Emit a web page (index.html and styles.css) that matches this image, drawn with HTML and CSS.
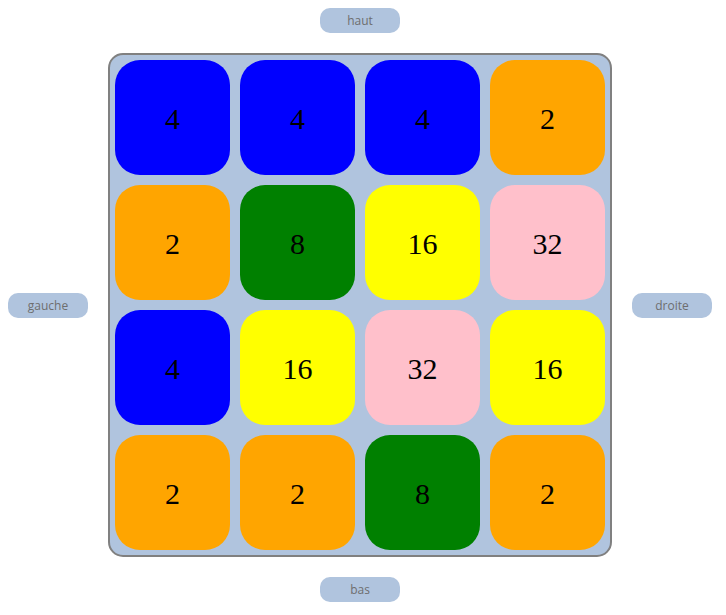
FILE: index.html
```html
<!DOCTYPE html>
<html lang="fr">
<head>
  <meta charset="UTF-8">
  <title>2048</title>
  <link rel="stylesheet" href="styles.css">
</head>
<body>
  <div class="game">
    <div class="row-top">
      <button class="move-btn" id="up">haut</button>
    </div>
    <div class="row-middle">
      <button class="move-btn" id="left">gauche</button>
      <div class="board">
        <div class="tile t4">4</div>
        <div class="tile t4">4</div>
        <div class="tile t4">4</div>
        <div class="tile t2">2</div>
        <div class="tile t2">2</div>
        <div class="tile t8">8</div>
        <div class="tile t16">16</div>
        <div class="tile t32">32</div>
        <div class="tile t4">4</div>
        <div class="tile t16">16</div>
        <div class="tile t32">32</div>
        <div class="tile t16">16</div>
        <div class="tile t2">2</div>
        <div class="tile t2">2</div>
        <div class="tile t8">8</div>
        <div class="tile t2">2</div>
      </div>
      <button class="move-btn" id="right">droite</button>
    </div>
    <div class="row-bottom">
      <button class="move-btn" id="down">bas</button>
    </div>
  </div>
</body>
</html>
```

FILE: styles.css
```css
body {
  margin: 8px;
  font-family: "Open Sans", sans-serif;
}
.game {
  width: 704px;
  display: flex;
  flex-direction: column;
  align-items: center;
  gap: 20px;
}
.row-middle {
  display: flex;
  align-items: center;
  gap: 20px;
}
.move-btn {
  width: 80px;
  height: 25px;
  background: #b0c4de;
  border: none;
  border-radius: 10px;
  color: #6e6e6e;
  font-family: "Open Sans", sans-serif;
  font-size: 12px;
  padding: 0;
  cursor: pointer;
}
.board {
  display: grid;
  grid-template-columns: repeat(4, 115px);
  grid-template-rows: repeat(4, 115px);
  gap: 10px;
  padding: 5px;
  background: #b0c4de;
  border: 2px solid #808080;
  border-radius: 15px;
}
.tile {
  display: flex;
  align-items: center;
  justify-content: center;
  padding-top: 2px;
  border-radius: 25px;
  font-family: "Liberation Serif", serif;
  font-size: 30px;
  color: #000;
}
.t2 { background: #ffa500; }
.t4 { background: #0000ff; }
.t8 { background: #008000; }
.t16 { background: #ffff00; }
.t32 { background: #ffc0cb; }
```
